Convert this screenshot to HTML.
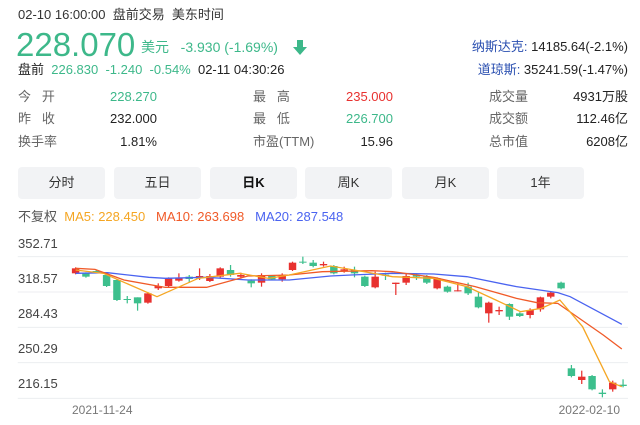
<!DOCTYPE html>
<html><head><meta charset="utf-8"><style>
*{margin:0;padding:0;box-sizing:border-box}
body{width:640px;height:425px;background:#fff;font-family:"Liberation Sans","Noto Sans CJK SC",sans-serif;color:#222;position:relative;overflow:hidden}
.a{position:absolute;white-space:nowrap;line-height:1}
.g{color:#3db88a}.r{color:#e8312f}.gr{color:#666}.b{color:#2a4fb0}
.btn{position:absolute;top:167px;height:32px;width:87px;background:#f2f3f5;border-radius:4px;text-align:center;line-height:32px;font-size:13px;color:#333}
</style></head><body>
<div class="a" style="left:18px;top:8px;font-size:13px;color:#333">02-10 16:00:00&nbsp; 盘前交易&nbsp; 美东时间</div>
<div class="a g" style="left:16px;top:28px;font-size:33px">228.070</div>
<div class="a g" style="left:141px;top:40px;font-size:14px">美元&nbsp;&nbsp; -3.930 (-1.69%)</div>
<svg class="a" style="left:292px;top:39px" width="16" height="17" viewBox="0 0 16 17"><path d="M5 1h6v7h4l-7 8-7-8h4z" fill="#3db88a"/></svg>
<div class="a" style="left:18px;top:63px;font-size:13px"><span style="color:#222">盘前</span>&nbsp; <span class="g">226.830&nbsp;&nbsp;-1.240&nbsp;&nbsp;-0.54%</span>&nbsp; 02-11 04:30:26</div>
<div class="a" style="right:12px;top:40px;font-size:13px"><span class="b">纳斯达克:</span> 14185.64(-2.1%)</div>
<div class="a" style="right:12px;top:63px;font-size:13px"><span class="b">道琼斯:</span> 35241.59(-1.47%)</div>

<div class="a gr" style="left:18px;top:90px;font-size:13px">今&nbsp;&nbsp;&nbsp;开</div>
<div class="a g" style="right:483px;top:90px;font-size:13px">228.270</div>
<div class="a gr" style="left:18px;top:112px;font-size:13px">昨&nbsp;&nbsp;&nbsp;收</div>
<div class="a" style="right:483px;top:112px;font-size:13px">232.000</div>
<div class="a gr" style="left:18px;top:135px;font-size:13px">换手率</div>
<div class="a" style="right:483px;top:135px;font-size:13px">1.81%</div>

<div class="a gr" style="left:253px;top:90px;font-size:13px">最&nbsp;&nbsp;&nbsp;高</div>
<div class="a r" style="right:247px;top:90px;font-size:13px">235.000</div>
<div class="a gr" style="left:253px;top:112px;font-size:13px">最&nbsp;&nbsp;&nbsp;低</div>
<div class="a g" style="right:247px;top:112px;font-size:13px">226.700</div>
<div class="a gr" style="left:253px;top:135px;font-size:13px">市盈(TTM)</div>
<div class="a" style="right:247px;top:135px;font-size:13px">15.96</div>

<div class="a gr" style="left:489px;top:90px;font-size:13px">成交量</div>
<div class="a" style="right:12px;top:90px;font-size:13px">4931万股</div>
<div class="a gr" style="left:489px;top:112px;font-size:13px">成交额</div>
<div class="a" style="right:12px;top:112px;font-size:13px">112.46亿</div>
<div class="a gr" style="left:489px;top:135px;font-size:13px">总市值</div>
<div class="a" style="right:12px;top:135px;font-size:13px">6208亿</div>

<div class="btn" style="left:18px">分时</div>
<div class="btn" style="left:114px">五日</div>
<div class="btn" style="left:210px;color:#111;font-weight:bold">日K</div>
<div class="btn" style="left:305px">周K</div>
<div class="btn" style="left:402px">月K</div>
<div class="btn" style="left:497px">1年</div>

<div class="a" style="left:18px;top:210px;font-size:13px"><span style="color:#555">不复权</span>&nbsp;&nbsp;<span style="color:#f5a623">MA5: 228.450</span>&nbsp;&nbsp;&nbsp;<span style="color:#f05a28">MA10: 263.698</span>&nbsp;&nbsp;&nbsp;<span style="color:#4a63f0">MA20: 287.548</span></div>

<div class="a" style="left:18px;top:237px;font-size:13px;color:#444">352.71</div>
<div class="a" style="left:18px;top:272px;font-size:13px;color:#444">318.57</div>
<div class="a" style="left:18px;top:307px;font-size:13px;color:#444">284.43</div>
<div class="a" style="left:18px;top:342px;font-size:13px;color:#444">250.29</div>
<div class="a" style="left:18px;top:377px;font-size:13px;color:#444">216.15</div>
<div class="a" style="left:72px;top:404px;font-size:12px;color:#777">2021-11-24</div>
<div class="a" style="right:20px;top:404px;font-size:12px;color:#777">2022-02-10</div>

<svg class="a" style="left:0;top:160px" width="640" height="265" viewBox="0 0 1549 795" preserveAspectRatio="none">
<g stroke="#eceef0" vector-effect="non-scaling-stroke" stroke-width="1">
<line x1="43" x2="1520" y1="290" y2="290" vector-effect="non-scaling-stroke"/>
<line x1="43" x2="1520" y1="396" y2="396" vector-effect="non-scaling-stroke"/>
<line x1="43" x2="1520" y1="502" y2="502" vector-effect="non-scaling-stroke"/>
<line x1="43" x2="1520" y1="608" y2="608" vector-effect="non-scaling-stroke"/>
<line x1="43" x2="1520" y1="715" y2="715" vector-effect="non-scaling-stroke"/>
</g>
<g id="c"></g>
<polyline fill="none" stroke="#4a63f0" stroke-width="1.3" vector-effect="non-scaling-stroke" points="183,340 260,338 360,352 400,355 500,352 600,360 700,360 800,348 850,345 950,340 1050,342 1130,350 1250,380 1350,398 1380,410 1505,493"/>
<polyline fill="none" stroke="#f05a28" stroke-width="1.3" vector-effect="non-scaling-stroke" points="183,325 230,328 300,360 400,382 500,382 600,348 700,345 780,335 900,332 950,335 1050,352 1150,380 1250,415 1300,428 1350,430 1460,525 1505,567"/>
<polyline fill="none" stroke="#f5a623" stroke-width="1.3" vector-effect="non-scaling-stroke" points="183,330 250,340 380,410 480,355 580,340 650,355 700,345 800,318 880,335 950,350 1050,355 1130,380 1200,420 1260,455 1310,445 1355,420 1410,500 1475,665 1505,680"/>
</svg>
<script>
var d=[[183,325,340,'r'],[208,340,350,'g'],[233,333,337,'g'],[258,345,378,'g'],[283,360,420,'g'],[308,417,420,'g',408,430],[333,412,430,'g',412,452],[358,400,428,'r'],[383,378,385,'r',370,390],[408,355,378,'r'],[433,355,362,'r',340,365],[458,350,357,'g',345,368],[483,348,355,'r',325,360],[508,348,363,'r',342,366],[533,325,350,'r'],[558,330,345,'g',315,350],[583,345,350,'r',338,356],[608,362,370,'g',358,382],[633,345,368,'r',340,380],[658,348,358,'g'],[683,345,358,'r',340,365],[708,308,330,'r'],[733,305,308,'g',290,312],[758,308,318,'g',300,322],[783,312,316,'r',305,320],[808,318,340,'g'],[833,328,332,'r',320,338],[858,330,340,'g',320,352],[883,350,378,'g'],[908,350,382,'r',335,385],[933,344,347,'g',338,360],[958,368,372,'r',368,405],[983,348,368,'r',340,375],[1008,345,350,'g',340,360],[1033,350,368,'g',345,372],[1058,355,385,'r'],[1083,380,395,'g'],[1108,391,394,'r',370,394],[1133,380,400,'g',368,405],[1158,410,442,'g',395,445],[1183,428,460,'r',425,488],[1208,450,454,'r',440,465],[1233,432,470,'g',430,480],[1258,460,468,'g'],[1283,450,465,'r',445,475],[1308,412,448,'r',410,455],[1333,398,410,'r',395,415],[1358,368,385,'g'],[1383,625,648,'g',615,652],[1408,650,660,'r',632,672],[1433,648,688,'g'],[1458,698,702,'g',688,712],[1483,668,688,'r',662,695],[1508,674,678,'g',658,682]];
var s='';d.forEach(function(c){var col=c[3]=='r'?'#e8312f':'#3dbf8d';var t=c[4]||c[1]-3,b=c[5]||c[2]+3;
s+='<line x1="'+c[0]+'" x2="'+c[0]+'" y1="'+t+'" y2="'+b+'" stroke="'+col+'" stroke-width="3"/>';
s+='<rect x="'+(c[0]-9)+'" y="'+c[1]+'" width="18" height="'+Math.max(c[2]-c[1],3)+'" fill="'+col+'"/>';});
document.getElementById('c').innerHTML=s;
</script>
</body></html>
